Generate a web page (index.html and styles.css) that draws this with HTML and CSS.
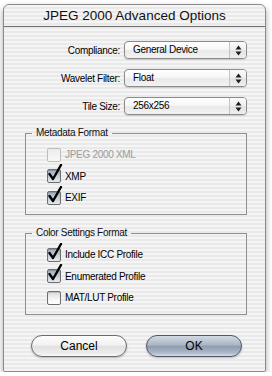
FILE: index.html
```html
<!DOCTYPE html>
<html lang="en">
<head>
  <meta charset="UTF-8">
  <meta name="viewport" content="width=device-width, initial-scale=1.0">
  <title>JPEG 2000 Advanced Options</title>
  <link rel="stylesheet" href="styles.css">
</head>
<body>
  <div class="window">
    <div class="titlebar">JPEG 2000 Advanced Options</div>
    <div class="content">
      <div class="options">
        <label class="opt_label">Compliance:</label>
        <div class="popup">
          <span class="popup_text">General Device</span>
          <span class="popup_arrows"><svg width="7" height="11" viewBox="0 0 7 11"><path d="M0.5 4.5 L3.5 0.5 L6.5 4.5 Z M0.5 6.5 L3.5 10.5 L6.5 6.5 Z"/></svg></span>
        </div>
        <label class="opt_label">Wavelet Filter:</label>
        <div class="popup">
          <span class="popup_text">Float</span>
          <span class="popup_arrows"><svg width="7" height="11" viewBox="0 0 7 11"><path d="M0.5 4.5 L3.5 0.5 L6.5 4.5 Z M0.5 6.5 L3.5 10.5 L6.5 6.5 Z"/></svg></span>
        </div>
        <label class="opt_label">Tile Size:</label>
        <div class="popup">
          <span class="popup_text">256x256</span>
          <span class="popup_arrows"><svg width="7" height="11" viewBox="0 0 7 11"><path d="M0.5 4.5 L3.5 0.5 L6.5 4.5 Z M0.5 6.5 L3.5 10.5 L6.5 6.5 Z"/></svg></span>
        </div>
      </div>

      <fieldset class="group">
        <legend>Metadata Format</legend>
        <div class="check disabled"><span class="box"></span>JPEG 2000 XML</div>
        <div class="check"><span class="box on"><svg class="tick" width="16" height="18" viewBox="0 0 16 18"><path d="M2.5 10 L6 15 L14 1"/></svg></span>XMP</div>
        <div class="check"><span class="box on"><svg class="tick" width="16" height="18" viewBox="0 0 16 18"><path d="M2.5 10 L6 15 L14 1"/></svg></span>EXIF</div>
      </fieldset>

      <fieldset class="group">
        <legend>Color Settings Format</legend>
        <div class="check"><span class="box on"><svg class="tick" width="16" height="18" viewBox="0 0 16 18"><path d="M2.5 10 L6 15 L14 1"/></svg></span>Include ICC Profile</div>
        <div class="check"><span class="box on"><svg class="tick" width="16" height="18" viewBox="0 0 16 18"><path d="M2.5 10 L6 15 L14 1"/></svg></span>Enumerated Profile</div>
        <div class="check"><span class="box"></span>MAT/LUT Profile</div>
      </fieldset>

      <div class="buttons">
        <button type="button" class="btn">Cancel</button>
        <button type="button" class="btn default">OK</button>
      </div>
    </div>
  </div>
</body>
</html>
```

FILE: styles.css
```css
*{
  margin: 0;
  padding: 0;
  box-sizing: border-box;
}
body{
  background: #fff;
  font-family: "Liberation Sans", Arial, sans-serif;
  font-size: 10px;
  letter-spacing: -0.3px;
  color: #000;
}
.window{
  width: 263px;
  height: 368px;
  margin: 4px 0 0 3px;
  border: 1px solid #8a8a8a;
  border-radius: 6px 6px 2px 2px;
  background: repeating-linear-gradient(#f5f5f5 0px, #f5f5f5 2px, #e9e9e9 2px, #e9e9e9 4px);
  box-shadow: 0 3px 6px rgba(0,0,0,0.35);
  overflow: hidden;
}
.titlebar{
  height: 22px;
  line-height: 21px;
  border-bottom: 1px solid #6f6f6f;
  text-align: center;
  font-size: 13.5px;
  letter-spacing: 0;
  color: #111;
}
.content{
  padding-top: 14px;
}
.options{
  display: grid;
  grid-template-columns: 116px 123px;
  column-gap: 4px;
  row-gap: 10px;
  align-items: center;
}
.opt_label{
  text-align: right;
}
.popup{
  height: 18px;
  display: flex;
  border: 1px solid #8b8b8b;
  border-radius: 4px;
  background: linear-gradient(#ffffff 0%, #f7f7f7 45%, #e9e9e9 55%, #f3f3f3 100%);
  box-shadow: 0 1px 1px rgba(0,0,0,0.15);
  overflow: hidden;
}
.popup_text{
  flex: 1;
  padding-left: 8px;
  line-height: 15px;
}
.popup_arrows{
  width: 17px;
  display: flex;
  align-items: center;
  justify-content: center;
  border-left: 1px solid #c4c4c4;
  background: linear-gradient(#fbfbfb 0%, #eeeeee 50%, #e2e2e2 55%, #efefef 100%);
}
.popup_arrows svg{
  fill: #1e1e1e;
}
.group{
  width: 222px;
  margin: 12px 0 0 21px;
  padding: 5px 0 5.5px 6px;
  border: 1px solid #8e8e8e;
  min-inline-size: 0;
}
.group legend{
  padding: 0 4px;
  line-height: 12px;
  color: #111;
}
.check{
  height: 21.5px;
  display: flex;
  align-items: center;
  gap: 4px;
  margin-left: 15px;
}
.check.disabled{
  color: #9b9b9b;
}
.box{
  position: relative;
  width: 14px;
  height: 14px;
  border: 1px solid #6e6e6e;
  border-radius: 2px;
  background: linear-gradient(#dcdcdc 0%, #f2f2f2 50%, #ffffff 100%);
  box-shadow: inset 0 1px 1px rgba(0,0,0,0.15);
}
.check.disabled .box{
  border-color: #bdbdbd;
  background: linear-gradient(#ececec, #f8f8f8);
  box-shadow: none;
}
.box.on{
  background: linear-gradient(#9fabba 0%, #c3ccd7 50%, #e6ebf0 100%);
}
.tick{
  position: absolute;
  left: -1px;
  top: -6px;
  fill: none;
  stroke: #000;
  stroke-width: 2.4px;
  stroke-linecap: round;
  stroke-linejoin: round;
}
.buttons{
  display: flex;
  gap: 19px;
  margin-top: 20px;
  padding-left: 27px;
}
.btn{
  width: 96px;
  height: 22px;
  border: 1px solid #6b6b6b;
  border-radius: 11px;
  font-family: "Liberation Sans", Arial, sans-serif;
  font-size: 12px;
  letter-spacing: 0;
  color: #000;
  background: linear-gradient(#fdfdfd 0%, #f1f1f1 45%, #e1e1e1 52%, #ececec 85%, #fbfbfb 100%);
  box-shadow: 0 1px 2px rgba(0,0,0,0.25);
}
.btn.default{
  border-color: #4e5868;
  background: linear-gradient(#d3dae3 0%, #aab5c3 45%, #8e9cb0 52%, #aebacb 85%, #d6dde6 100%);
}
```
